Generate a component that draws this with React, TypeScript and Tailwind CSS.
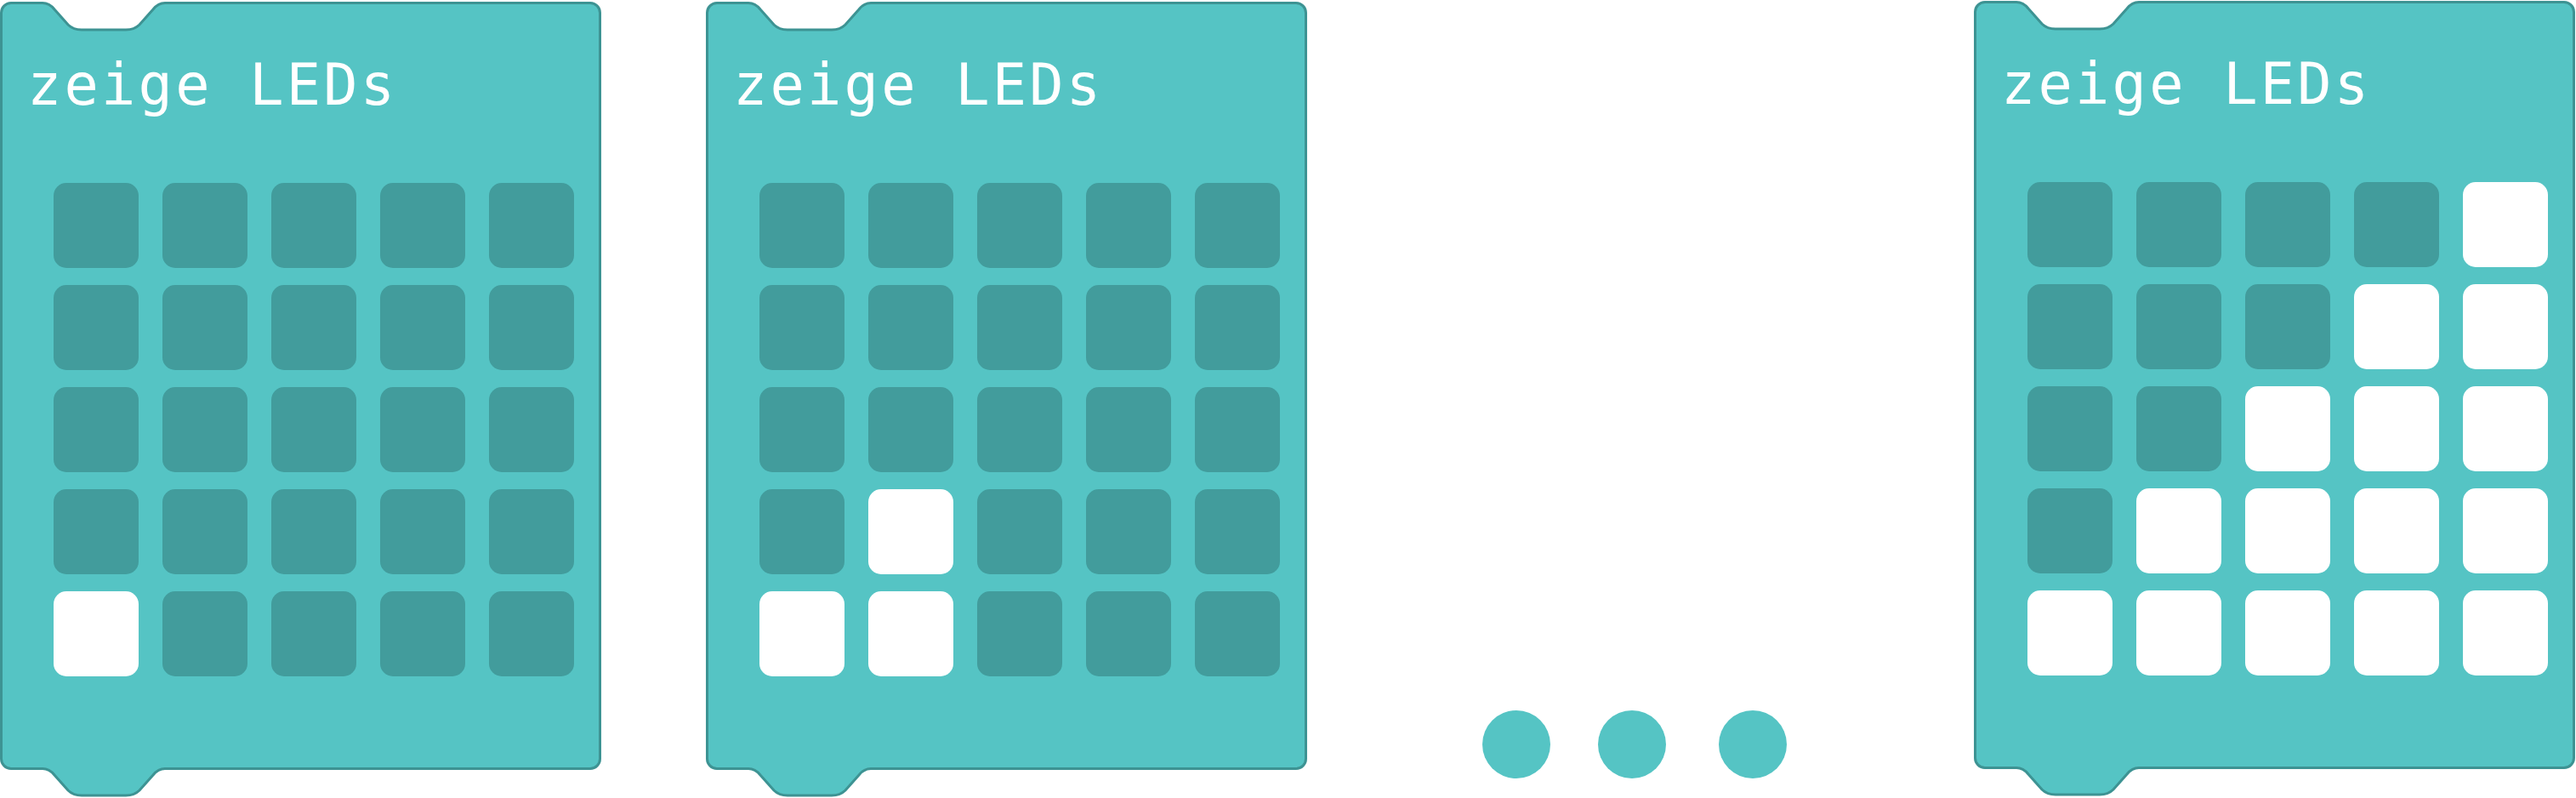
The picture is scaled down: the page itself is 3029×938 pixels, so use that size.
const NOTCH_EDGE =
  'H 50 Q 58 1.5 64 9 L 80 27 Q 86 33 96 33 H 148 Q 158 33 164 27 L 180 9 Q 186 1.5 194 1.5 H 214';
const NOTCH_LINE = `M 30 1.5 ${NOTCH_EDGE}`;
const NOTCH_AREA = `M 30 -3 V 1.5 ${NOTCH_EDGE} V -3 Z`;

type Grid = number[][];

const FRAMES: Grid[] = [
  [
    [0, 0, 0, 0, 0],
    [0, 0, 0, 0, 0],
    [0, 0, 0, 0, 0],
    [0, 0, 0, 0, 0],
    [1, 0, 0, 0, 0],
  ],
  [
    [0, 0, 0, 0, 0],
    [0, 0, 0, 0, 0],
    [0, 0, 0, 0, 0],
    [0, 1, 0, 0, 0],
    [1, 1, 0, 0, 0],
  ],
  [
    [0, 0, 0, 0, 1],
    [0, 0, 0, 1, 1],
    [0, 0, 1, 1, 1],
    [0, 1, 1, 1, 1],
    [1, 1, 1, 1, 1],
  ],
];

const ShowLedsBlock = ({ leds, className }: { leds: Grid; className: string }) => {
  return (
    <div
      className={`relative h-[903px] w-[707px] shrink-0 rounded-[13px] border-[3px] border-[#3d9393] bg-[#55c4c4] ${className}`}
    >
      {/* notch cut into the top edge */}
      <svg className="absolute -left-[3px] -top-[3px] overflow-visible" width="230" height="40">
        <path d={NOTCH_AREA} fill="#ffffff" />
        <path d={NOTCH_LINE} fill="none" stroke="#3d9393" strokeWidth="3" />
      </svg>

      <div className="pl-[29px] pt-[62px] font-['DejaVu_Sans_Mono',monospace] text-[67px] leading-none tracking-[3.2px] whitespace-pre text-white">
        zeige LEDs
      </div>

      <div className="mt-[81px] grid grid-cols-[repeat(5,100px)] gap-x-[28px] gap-y-[20px] pl-[60px]">
        {leds.flat().map((on, i) => (
          <div
            key={i}
            className={`h-[100px] w-[100px] rounded-[15px] ${on ? 'bg-white' : 'bg-[#429c9c]'}`}
          />
        ))}
      </div>

      {/* connector tab below the bottom edge */}
      <svg className="absolute -left-[3px] top-full overflow-visible" width="230" height="40">
        <path d={NOTCH_AREA} fill="#55c4c4" />
        <path d={NOTCH_LINE} fill="none" stroke="#3d9393" strokeWidth="3" />
      </svg>
    </div>
  );
};

export default function App() {
  return (
    <div className="flex h-[938px] w-[3029px] items-start overflow-hidden bg-white">
      <ShowLedsBlock leds={FRAMES[0]} className="mt-[2px]" />
      <ShowLedsBlock leds={FRAMES[1]} className="ml-[123px] mt-[2px]" />

      <div className="ml-[206px] mt-[835px] flex items-center">
        <div className="size-[80px] rounded-full bg-[#55c4c4]" />
        <div className="ml-[56px] size-[80px] rounded-full bg-[#55c4c4]" />
        <div className="ml-[62px] size-[80px] rounded-full bg-[#55c4c4]" />
      </div>

      <ShowLedsBlock leds={FRAMES[2]} className="ml-[220px] mt-[1px]" />
    </div>
  );
}
